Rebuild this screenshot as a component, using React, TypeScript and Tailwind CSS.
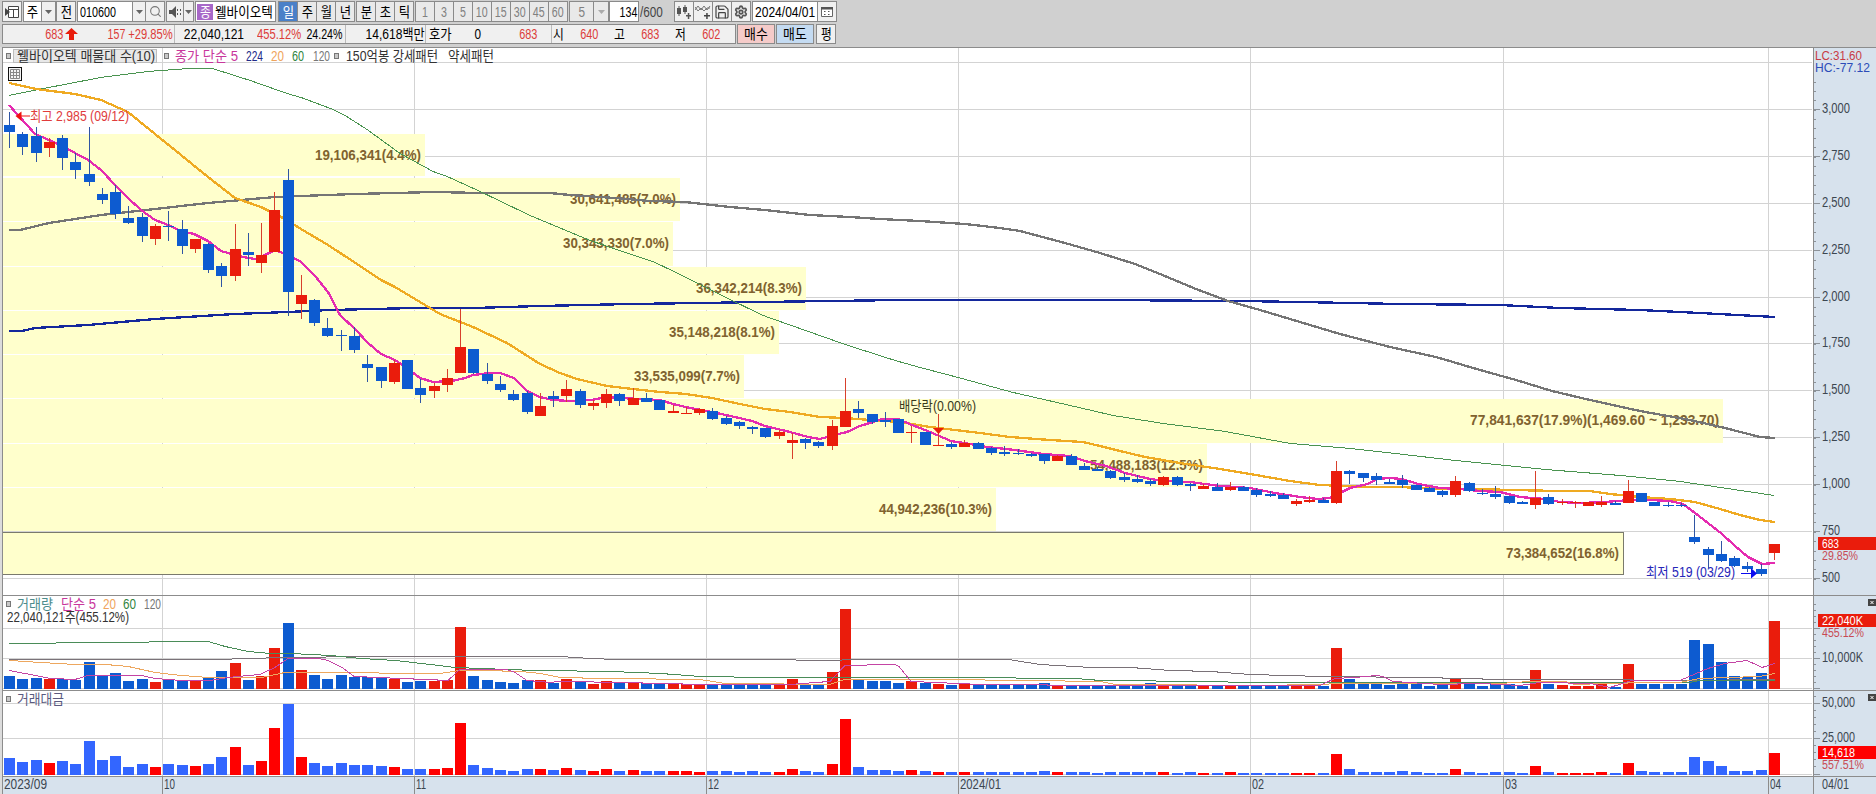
import type { ReactNode } from "react";
import { Search, Settings, Save } from "lucide-react";
import clsx from "clsx";

// [up, high, top, bottom, low, volume, amount]
type Candle = [number, number, number, number, number, number, number];

const candles: Candle[] = [
  [0, 112, 125, 132, 148, 13, 17], [0, 132, 134, 147, 155, 10, 13], [0, 127, 136, 153, 162, 11, 15], [1, 138, 142, 148, 157, 10, 12],
  [0, 135, 138, 158, 170, 10, 14], [0, 153, 162, 170, 179, 9, 11], [0, 127, 174, 182, 186, 27, 34], [0, 188, 194, 200, 204, 13, 15],
  [0, 185, 192, 214, 219, 16, 19], [0, 206, 218, 223, 224, 8, 8], [0, 213, 217, 236, 242, 10, 11], [1, 224, 226, 239, 245, 7, 8],
  [0, 211, 226, 227, 241, 9, 11], [0, 220, 229, 246, 254, 8, 10], [1, 239, 239, 249, 253, 8, 9], [0, 243, 244, 270, 273, 11, 11],
  [0, 263, 266, 276, 287, 18, 18], [1, 224, 249, 276, 281, 26, 28], [0, 233, 252, 255, 266, 9, 10], [1, 223, 255, 263, 273, 13, 14],
  [1, 192, 210, 252, 252, 41, 47], [0, 169, 180, 292, 316, 66, 71], [1, 275, 295, 304, 319, 19, 18], [0, 299, 300, 323, 326, 14, 12],
  [0, 318, 328, 336, 337, 10, 9], [0, 330, 335, 336, 351, 14, 12], [0, 327, 336, 350, 353, 12, 10], [0, 355, 364, 368, 382, 12, 10],
  [0, 367, 367, 381, 388, 11, 9], [1, 360, 363, 382, 384, 10, 8], [0, 360, 360, 389, 389, 7, 6], [0, 379, 388, 395, 403, 8, 6],
  [1, 383, 386, 391, 398, 8, 6], [1, 369, 378, 385, 392, 9, 7], [1, 309, 347, 373, 373, 62, 52], [0, 349, 349, 373, 374, 13, 10],
  [0, 363, 374, 381, 384, 9, 7], [0, 376, 384, 390, 392, 7, 5], [0, 390, 394, 400, 401, 6, 4], [0, 391, 393, 412, 414, 9, 6],
  [1, 393, 406, 416, 416, 9, 6], [0, 391, 396, 399, 407, 6, 5], [1, 380, 389, 396, 402, 10, 7], [0, 389, 391, 405, 408, 7, 5],
  [1, 400, 403, 406, 410, 5, 4], [1, 389, 394, 403, 408, 8, 6], [0, 393, 394, 401, 406, 6, 4], [1, 388, 398, 405, 405, 6, 5],
  [0, 393, 398, 402, 402, 6, 4], [0, 400, 400, 410, 410, 6, 4], [1, 405, 411, 413, 413, 5, 4], [1, 407, 413, 414, 414, 5, 4],
  [1, 408, 409, 413, 415, 4, 3], [0, 408, 411, 419, 420, 4, 4], [0, 416, 418, 424, 425, 4, 4], [0, 421, 422, 426, 429, 4, 3],
  [0, 426, 427, 429, 434, 4, 4], [0, 428, 428, 437, 438, 4, 3], [1, 430, 432, 436, 439, 4, 3], [1, 433, 440, 443, 459, 10, 6],
  [0, 438, 439, 443, 449, 5, 4], [0, 441, 442, 446, 448, 5, 3], [1, 420, 426, 446, 450, 17, 11], [1, 378, 411, 427, 427, 80, 56],
  [0, 401, 409, 413, 418, 9, 8], [0, 414, 414, 422, 424, 8, 5], [0, 412, 420, 422, 427, 8, 5], [0, 419, 419, 433, 433, 6, 4],
  [1, 426, 432, 433, 443, 8, 5], [0, 432, 432, 445, 445, 6, 4], [1, 414, 445, 446, 446, 5, 3], [0, 442, 444, 447, 449, 4, 3],
  [1, 440, 443, 447, 447, 5, 3], [0, 442, 443, 449, 449, 4, 3], [0, 447, 448, 453, 455, 4, 3], [0, 446, 452, 454, 456, 4, 3],
  [0, 449, 453, 454, 455, 4, 3], [0, 453, 454, 456, 457, 4, 3], [0, 454, 454, 461, 464, 6, 4], [1, 455, 456, 461, 461, 4, 3],
  [0, 454, 456, 465, 465, 4, 3], [0, 463, 466, 470, 470, 4, 3], [0, 467, 469, 471, 471, 4, 2], [0, 470, 471, 478, 479, 4, 3],
  [0, 473, 477, 480, 482, 4, 3], [0, 475, 479, 482, 483, 4, 3], [0, 479, 481, 484, 486, 6, 3], [1, 476, 477, 485, 486, 4, 3],
  [0, 476, 477, 485, 486, 4, 2], [0, 483, 484, 486, 491, 4, 3], [1, 484, 486, 489, 489, 3, 2], [0, 483, 487, 491, 491, 3, 2],
  [1, 482, 487, 490, 491, 3, 3], [0, 486, 487, 491, 491, 3, 2], [0, 488, 490, 495, 497, 3, 2], [0, 491, 494, 496, 497, 3, 2],
  [0, 493, 495, 499, 499, 3, 2], [1, 499, 501, 504, 506, 3, 2], [1, 496, 500, 502, 503, 3, 2], [0, 498, 500, 503, 503, 3, 2],
  [1, 461, 471, 503, 504, 41, 21], [0, 470, 471, 474, 484, 10, 6], [0, 473, 473, 478, 482, 5, 3], [0, 473, 476, 480, 485, 6, 3],
  [0, 479, 482, 484, 484, 4, 3], [0, 475, 480, 485, 488, 6, 4], [0, 485, 485, 490, 490, 5, 3], [0, 487, 488, 492, 492, 3, 2],
  [0, 490, 491, 495, 497, 4, 2], [1, 476, 481, 495, 497, 11, 6], [0, 482, 483, 491, 492, 5, 3], [0, 489, 493, 494, 495, 3, 2],
  [0, 486, 494, 497, 499, 5, 3], [0, 496, 496, 503, 504, 5, 3], [0, 501, 502, 504, 504, 3, 2], [1, 471, 498, 505, 509, 19, 9],
  [0, 494, 497, 504, 505, 5, 3], [1, 499, 502, 503, 505, 4, 2], [1, 501, 502, 503, 508, 3, 2], [1, 502, 502, 506, 506, 3, 2],
  [1, 496, 502, 505, 507, 5, 3], [0, 501, 503, 505, 505, 2, 2], [1, 480, 491, 503, 503, 25, 12], [0, 493, 493, 502, 502, 5, 4],
  [0, 502, 502, 506, 506, 5, 3], [0, 502, 505, 506, 507, 5, 3], [0, 503, 505, 506, 507, 5, 3], [0, 515, 537, 542, 544, 49, 18],
  [0, 547, 549, 555, 568, 45, 14], [0, 541, 554, 561, 562, 27, 9], [0, 556, 558, 566, 567, 13, 4], [0, 562, 566, 569, 572, 12, 4],
  [0, 564, 569, 574, 576, 16, 5], [1, 544, 544, 553, 560, 68, 22],
];

const barX = (i: number) => Math.round(4 + i * 13.27);

const profile = [
  { y: 134, b: 176, r: 425, text: "19,106,341(4.4%)", w: 106 },
  { y: 178, b: 221, r: 680, text: "30,641,485(7.0%)", w: 106 },
  { y: 222, b: 266, r: 673, text: "30,343,330(7.0%)", w: 106 },
  { y: 267, b: 310, r: 806, text: "36,342,214(8.3%)", w: 106 },
  { y: 311, b: 354, r: 779, text: "35,148,218(8.1%)", w: 106 },
  { y: 355, b: 398, r: 744, text: "33,535,099(7.7%)", w: 106 },
  { y: 399, b: 443, r: 1723, text: "77,841,637(17.9%)(1,469.60 ~ 1,233.70)", w: 249 },
  { y: 444, b: 487, r: 1207, text: "54,488,183(12.5%)", w: 113 },
  { y: 488, b: 531, r: 996, text: "44,942,236(10.3%)", w: 113 },
];

const ma5 = "9,105 35,134 49,140 62,146 75,153 88,160 101,170 116,186 128,198 141,210 155,220 168,225 181,231 194,234 208,241 221,251 235,255 248,258 256,259 267,254 275,250 290,256 301,262 315,276 328,292 340,315 355,329 368,343 381,354 395,360 408,369 420,378 433,382 452,381 465,378 473,375 490,373 500,373 514,378 527,391 540,397 553,400 570,401 592,400 606,397 620,398 640,399 660,400 673,404 690,408 712,412 735,417 752,421 765,426 790,432 808,437 820,439 834,435 847,432 860,426 873,422 882,419 898,419 912,425 925,430 937,435 951,441 964,443 987,447 1015,450 1043,454 1070,456 1085,461 1106,466 1125,473 1150,479 1165,481 1190,482 1220,486 1250,488 1275,493 1300,497 1318,499 1330,498 1340,493 1350,488 1368,484 1377,479 1390,478 1402,479 1418,484 1440,488 1460,489 1480,491 1500,492 1520,497 1545,499 1560,502 1580,503 1605,502 1630,500 1650,500 1670,501 1683,504 1695,513 1708,523 1722,534 1735,546 1748,557 1762,564 1775,563";
const ma20 = "9,83 36,89 75,94 101,100 128,112 155,134 181,155 208,177 235,198 261,207 285,219 301,229 328,245 354,262 381,280 395,287 420,302 440,314 473,327 507,343 540,364 560,373 577,379 607,386 633,389 660,392 686,394 712,398 740,404 765,409 790,412 820,417 845,418 870,420 900,422 930,427 955,430 980,433 1010,437 1050,440 1083,442 1100,446 1120,451 1145,457 1180,463 1220,469 1250,474 1290,481 1320,485 1345,486 1370,487 1400,487 1440,489 1480,489 1510,490 1560,491 1590,491 1610,494 1640,497 1670,499 1695,502 1720,509 1740,515 1760,520 1775,522";
const ma60 = "9,95 49,87 101,77 148,71 190,68 212,68 225,72 250,80 287,93 301,97 333,109 345,115 367,129 400,153 433,171 447,176 480,191 530,215 590,240 655,262 680,274 732,300 763,315 845,344 895,360 920,367 958,377 1013,392 1070,405 1113,415 1163,423 1225,431 1290,443 1350,448 1395,453 1455,460 1545,469 1620,475 1680,481 1774,495";
const ma120 = "9,230 20,230 49,223 101,215 155,209 208,203 275,197 301,196 354,194 435,192 480,193 550,193 570,195 615,198 650,201 685,202 730,207 765,210 810,215 850,217 880,219 920,221 965,224 1000,228 1020,231 1065,243 1100,253 1135,264 1160,274 1196,289 1228,301 1260,310 1300,322 1340,334 1390,347 1436,357 1480,370 1516,380 1552,391 1590,400 1640,411 1690,420 1725,428 1760,437 1775,438";
const ma224 = "9,331 22,331 35,328 88,325 155,319 235,314 288,312 330,310 415,308 474,308 540,306 630,304 700,303 760,302 830,301 900,300 1100,300 1240,301 1300,302 1400,304 1500,305 1560,308 1640,310 1700,313 1775,317";

const vol60 = "9,643 55,643 58,642 148,642 150,641 208,641 225,646 248,651 270,653 290,653 330,655 360,658 395,660 430,664 455,667 480,668 534,670 610,671 660,673 700,676 760,677 940,677 1075,678 1100,680 1200,681 1250,682 1500,682 1560,682 1690,682 1700,680 1775,680";
const vol120 = "9,659 225,659 240,658 360,656 560,656 590,658 615,659 790,659 800,660 840,660 845,659 1008,659 1040,664 1090,667 1130,667 1170,670 1210,671 1250,674 1320,676 1420,677 1500,679 1560,679 1690,680 1775,679";
const vol20 = "9,660 40,662 75,664 105,664 128,666 155,672 181,675 208,677 262,677 285,672 300,672 440,673 460,670 480,670 520,671 540,673 560,677 600,678 700,679 725,683 830,684 845,679 940,679 1100,681 1115,684 1260,685 1320,684 1340,683 1500,683 1530,681 1565,681 1575,684 1610,683 1650,682 1680,682 1700,678 1760,676 1775,673";
const vol5 = "9,670 30,674 50,678 75,679 88,675 141,675 155,678 181,680 210,680 228,677 260,674 275,667 288,658 318,658 328,660 342,667 354,676 400,678 448,680 460,669 506,669 515,672 527,680 550,682 560,681 620,682 700,684 790,684 830,681 845,665 895,664 899,666 911,681 980,684 1100,685 1320,685 1335,678 1355,677 1377,675 1383,676 1393,681 1440,684 1480,683 1520,685 1540,682 1590,683 1610,687 1632,680 1680,680 1708,668 1725,663 1747,660 1762,667 1775,663";

const months = [
  { x: 162, label: "10", w: 11 },
  { x: 414, label: "11", w: 10 },
  { x: 706, label: "12", w: 11 },
  { x: 958, label: "2024/01", w: 41 },
  { x: 1250, label: "02", w: 12 },
  { x: 1503, label: "03", w: 12 },
  { x: 1768, label: "04", w: 11 },
];

const UP = "#ea1c0c";
const DOWN = "#0d5bd0";

// chart text squeezed to the width of the terminal's bitmap font
function Label({ x, y, w, fill = "#333", size = 14, bold, children }: { x: number; y: number; w: number; fill?: string; size?: number; bold?: boolean; children: string }) {
  return (
    <text x={x} y={y} textLength={w} lengthAdjust="spacingAndGlyphs" fill={fill} fontSize={size} fontWeight={bold ? 700 : 400} xmlSpace="preserve">
      {children}
    </text>
  );
}

function Grid({ top, height, ys }: { top: number; height: number; ys: number[] }) {
  return (
    <g fill="#d3d3d3">
      {ys.map((y) => <rect key={y} x={3} y={y} width={1809} height={1} />)}
      {months.map((m) => <rect key={m.x} x={m.x} y={top} width={1} height={height} />)}
    </g>
  );
}

function Line({ points, color, width = 1 }: { points: string; color: string; width?: number }) {
  return (
    <polyline
      points={points}
      transform={width === 1 ? "translate(0 .45)" : undefined}
      fill="none"
      stroke={color}
      strokeWidth={width}
      strokeLinejoin="round"
      shapeRendering="crispEdges"
    />
  );
}

function Bullet({ x, y }: { x: number; y: number }) {
  return <rect x={x + 0.5} y={y + 0.5} width={4} height={5} fill="#c8c8c8" stroke="#777" />;
}

function Panel({ top, height, children, axis }: { top: number; height: number; children: ReactNode; axis: ReactNode }) {
  return (
    <div className="flex">
      <svg className="block shrink-0 bg-white" width={1813} height={height} viewBox={`0 ${top} 1813 ${height}`}>
        {children}
        <rect x={0} y={top} width={2} height={height} fill="#dcdcdc" />
        <rect x={2} y={top} width={1} height={height} fill="#8c8c8c" />
        <rect x={2} y={top} width={1811} height={1} fill="#8c8c8c" />
      </svg>
      <svg className="block shrink-0 bg-[#d7e2ed]" width={63} height={height} viewBox={`1813 ${top} 63 ${height}`}>
        <rect x={1813} y={top} width={1} height={height} fill="#8c8c8c" />
        <rect x={1813} y={top} width={63} height={1} fill="#8c8c8c" />
        {axis}
      </svg>
    </div>
  );
}

function Ticks({ ys, w }: { ys: number[]; w: number }) {
  return <g fill="#8c9299">{ys.map((y) => <rect key={y} x={1814} y={y} width={w} height={1} />)}</g>;
}

function CloseMark({ y }: { y: number }) {
  return (
    <g>
      <rect x={1868} y={y} width={8} height={7} fill="#444" />
      <path d={`M1870.5 ${y + 2}l3 3m0-3l-3 3`} stroke="#fff" strokeWidth={1} />
    </g>
  );
}

const priceYs = Array.from({ length: 12 }, (_, k) => Math.round(62 + k * 46.9));
const priceMinor = Array.from({ length: 54 }, (_, k) => Math.round(81.5 + k * 9.38)).filter((y) => y < 594);

function PricePanel() {
  return (
    <Panel
      top={47}
      height={548}
      axis={
        <>
          <Ticks ys={priceMinor} w={2} />
          <Ticks ys={priceYs.slice(1)} w={6} />
          <Label x={1815} y={60} w={47} size={12} fill="#c83a44">LC:31.60</Label>
          <Label x={1815} y={72} w={55} size={12} fill="#2b4cb8">HC:-77.12</Label>
          {priceYs.slice(1).map((y, k) => {
            const v = 3000 - k * 250;
            return <Label key={y} x={1822} y={y + 4} w={v >= 1000 ? 28 : 18} fill="#3c4650">{v.toLocaleString("en-US")}</Label>;
          })}
          <rect x={1818} y={537} width={58} height={13} fill={UP} />
          <Label x={1822} y={548} w={17} size={13} fill="#fff">683</Label>
          <Label x={1822} y={560} w={36} size={12} fill="#c84a54">29.85%</Label>
        </>
      }
    >
      <Grid top={47} height={548} ys={priceYs} />
      {profile.map((p) => <rect key={p.y} x={3} y={p.y} width={p.r - 3} height={p.b - p.y} fill="#ffffcc" />)}
      <rect x={2.5} y={532.5} width={1621} height={42} fill="#ffffcc" stroke="#7a7a6c" />
      {profile.map((p) => <Label key={p.y} x={p.r - 4 - p.w} y={p.y + 26} w={p.w} fill="#80622f" size={14} bold>{p.text}</Label>)}
      <Label x={1506} y={558} w={113} fill="#80622f" size={14} bold>73,384,652(16.8%)</Label>
      <Line points={ma224} color="#14289c" width={2.3} />
      <Line points={ma120} color="#757575" width={2.3} />
      <Line points={ma60} color="#4a9450" />
      <Line points={ma20} color="#efaa22" width={2.3} />
      <Line points={ma5} color="#e42bb0" width={2.3} />
      {candles.map(([up, h, t, b, l], i) => (
        <g key={i}>
          <rect x={barX(i) + 5} y={h} width={1} height={l - h} fill={up ? "#d8402c" : "#2f55a4"} />
          <rect x={barX(i)} y={t} width={11} height={b - t} fill={up ? UP : DOWN} />
        </g>
      ))}
      <path d="M15.500 116l6-4.500v9.500zM21 115.500h9v1h-9z" fill="#f01010" />
      <Label x={30} y={121} w={99} fill="#e03c3c">최고 2,985 (09/12)</Label>
      <path d="M1741 573h10v-5l6 5.500l-6 5v-4.500h-10z" fill="#0a0af0" />
      <Label x={1646} y={577} w={89} fill="#2626b8">최저 519 (03/29)</Label>
      <path d="M933 428h11l-5.500 6z" fill={UP} />
      <Label x={899} y={411} w={77} fill="#3a3a1c">배당락(0.00%)</Label>

      <Bullet x={6} y={53} />
      <rect x={13.500} y={49.500} width={143} height={13} fill="#e8e8e8" stroke="#bdbdbd" />
      <Label x={17} y={61} w={138}>웰바이오텍 매물대 수(10)</Label>
      <Bullet x={164} y={53} />
      <Label x={175} y={61} w={63} fill="#c8369c">종가 단순 5</Label>
      <Label x={246} y={61} w={17} fill="#202a88">224</Label>
      <Label x={271} y={61} w={13} fill="#efa45c">20</Label>
      <Label x={292} y={61} w={12} fill="#2f8440">60</Label>
      <Label x={313} y={61} w={17} fill="#777">120</Label>
      <Bullet x={334} y={53} />
      <Label x={346} y={61} w={92}>150억봉 강세패턴</Label>
      <Label x={448} y={61} w={46}>약세패턴</Label>
      <rect x={8.500} y={67.500} width={13} height={13} fill="#f4f4f4" stroke="#111" />
      <path d="M10.500 69.500h9v9h-9zM10.500 72.500h9M10.500 75.500h9M13.500 69.500v9M16.500 69.500v9" fill="none" stroke="#888" />
    </Panel>
  );
}

function VolumePanel() {
  return (
    <Panel
      top={595}
      height={95}
      axis={
        <>
          <Ticks ys={[604, 610, 616, 622, 634, 640, 646, 652, 664, 670, 676, 682]} w={2} />
          <Ticks ys={[628, 658, 688]} w={6} />
          <CloseMark y={599} />
          <rect x={1818} y={614} width={58} height={13} fill={UP} />
          <Label x={1822} y={625} w={41} size={13} fill="#fff">22,040K</Label>
          <Label x={1822} y={637} w={42} size={12} fill="#c84a54">455.12%</Label>
          <Label x={1822} y={662} w={41} fill="#3c4650">10,000K</Label>
        </>
      }
    >
      <Grid top={595} height={95} ys={[628, 658, 688]} />
      {candles.map((c, i) => <rect key={i} x={barX(i)} y={689 - c[5]} width={11} height={c[5]} fill={c[0] ? UP : DOWN} />)}
      <Line points={vol120} color="#7a7278" />
      <Line points={vol60} color="#4a8c58" />
      <Line points={vol20} color="#eda75e" />
      <Line points={vol5} color="#c444a4" />
      <Bullet x={6} y={601} />
      <Label x={17} y={609} w={36} fill="#4c8c8c">거래량</Label>
      <Label x={61} y={609} w={35} fill="#c8369c">단순 5</Label>
      <Label x={103} y={609} w={13} fill="#efa45c">20</Label>
      <Label x={123} y={609} w={13} fill="#2f8440">60</Label>
      <Label x={144} y={609} w={17} fill="#777">120</Label>
      <Label x={7} y={622} w={122}>22,040,121주(455.12%)</Label>
    </Panel>
  );
}

function AmountPanel() {
  return (
    <Panel
      top={690}
      height={86}
      axis={
        <>
          <Ticks ys={[696, 710, 717, 724, 731, 745, 752, 759, 766]} w={2} />
          <Ticks ys={[703, 738, 774]} w={6} />
          <CloseMark y={694} />
          <Label x={1822} y={707} w={33} fill="#3c4650">50,000</Label>
          <Label x={1822} y={742} w={33} fill="#3c4650">25,000</Label>
          <rect x={1818} y={746} width={58} height={13} fill="#f00" />
          <Label x={1822} y={757} w={33} size={13} fill="#fff">14,618</Label>
          <Label x={1822} y={769} w={42} size={12} fill="#c84a54">557.51%</Label>
        </>
      }
    >
      <Grid top={690} height={86} ys={[703, 738, 774]} />
      {candles.map((c, i) => <rect key={i} x={barX(i)} y={775 - c[6]} width={11} height={c[6]} fill={c[0] ? "#ff0000" : "#3366ff"} />)}
      <Bullet x={6} y={696} />
      <Label x={17} y={704} w={47} fill="#5a5a80">거래대금</Label>
    </Panel>
  );
}

function DateAxis() {
  return (
    <svg className="block bg-[#d7e2ed]" width={1876} height={18} viewBox="0 776 1876 18">
      <rect x={0} y={776} width={2} height={18} fill="#dcdcdc" />
      <rect x={2} y={776} width={1} height={18} fill="#8c8c8c" />
      <rect x={2} y={776} width={1874} height={1} fill="#8c8c8c" />
      <Label x={4} y={789} w={43} fill="#3c4650">2023/09</Label>
      {months.map((m) => (
        <g key={m.x}>
          <rect x={m.x} y={776} width={1} height={18} fill="#8c8c8c" />
          <Label x={m.x + 2} y={789} w={m.w} fill="#3c4650">{m.label}</Label>
        </g>
      ))}
      <rect x={1813} y={776} width={1} height={18} fill="#8c8c8c" />
      <Label x={1822} y={789} w={27} fill="#3c4650">04/01</Label>
    </svg>
  );
}

function Cell({ className, children }: { className?: string; children?: ReactNode }) {
  return (
    <div className={clsx("flex h-full shrink-0 items-center justify-center border border-[#8a8a8a] whitespace-nowrap", className)}>
      {children}
    </div>
  );
}

function Txt({ className, children }: { className?: string; children: ReactNode }) {
  return <span className={clsx("inline-block shrink-0", className ?? "scale-x-[.84]")}>{children}</span>;
}

function Caret({ className = "text-[#666]" }: { className?: string }) {
  return (
    <svg className={clsx("shrink-0", className)} width="7" height="4" viewBox="0 0 7 4"><path d="M0 0h7L3.500 4z" fill="currentColor" /></svg>
  );
}

function Toolbar() {
  return (
    <div className="flex h-[22px] pt-px pl-[2px]">
      <Cell className="w-5 bg-[#f0f0f0]">
        <svg width="14" height="14" viewBox="0 0 14 14">
          <path d="M3.500 1.500h10v11h-10zM3.500 4.500h10M8.500 4.500v8" fill="#fff" stroke="#444" />
          <path d="M0 3v8l5-4z" fill="#444" />
        </svg>
      </Cell>
      <Cell className="ml-px w-[19px] bg-white"><Txt className="scale-x-[.88]">주</Txt></Cell>
      <Cell className="-ml-px w-[15px] bg-[#f0f0f0]"><Caret /></Cell>
      <Cell className="w-5 bg-[#f0f0f0]"><Txt className="scale-x-[.88]">전</Txt></Cell>
      <Cell className="ml-px w-14 justify-start bg-white pl-[2px]"><Txt className="origin-left scale-x-[.77]">010600</Txt></Cell>
      <Cell className="-ml-px w-3.5 bg-[#f0f0f0]"><Caret /></Cell>
      <Cell className="-ml-px w-5 bg-[#f0f0f0]"><Search size={13} color="#777" /></Cell>
      <Cell className="ml-px w-[18px] bg-[#f0f0f0]">
        <svg width="13" height="12" viewBox="0 0 13 12">
          <path d="M0 4h3l4-4v12l-4-4h-3z" fill="#555" />
          <path d="M8 3h1v2h-1zM8 7h1v2h-1zM11 3h1v2h-1zM11 7h1v2h-1z" fill="#555" />
        </svg>
      </Cell>
      <Cell className="-ml-px w-[11px] bg-[#f0f0f0]"><Caret /></Cell>
      <Cell className="ml-px w-[81px] justify-start bg-white pl-px">
        <span className="flex h-4 w-4 shrink-0 items-center justify-center bg-[#a868c8] text-white"><Txt>종</Txt></span>
        <Txt className="ml-[2px] origin-left scale-x-[.9]">웰바이오텍</Txt>
      </Cell>
      <Cell className="ml-[2px] w-5 bg-[#4a80c8] text-white"><Txt className="scale-x-[.88]">일</Txt></Cell>
      {["주", "월", "년"].map((t) => <Cell key={t} className="-ml-px w-5 bg-[#e9e9e9]"><Txt className="scale-x-[.88]">{t}</Txt></Cell>)}
      <Cell className="ml-px w-5 bg-[#e9e9e9]"><Txt className="scale-x-[.88]">분</Txt></Cell>
      {["초", "틱"].map((t) => <Cell key={t} className="-ml-px w-5 bg-[#e9e9e9]"><Txt className="scale-x-[.88]">{t}</Txt></Cell>)}
      <div className="ml-px flex text-[#808080]">
        {["1", "3", "5", "10", "15", "30", "45", "60"].map((t, i) => (
          <Cell key={t} className={clsx("w-5 bg-[#e9e9e9]", i > 0 && "-ml-px")}><Txt className="scale-x-[.76]">{t}</Txt></Cell>
        ))}
      </div>
      <Cell className="ml-px w-[25px] bg-[#e9e9e9] text-[#808080]"><Txt>5</Txt></Cell>
      <Cell className="-ml-px w-4 bg-[#e9e9e9]"><Caret className="text-[#aaa]" /></Cell>
      <Cell className="w-[30px] justify-end bg-white pr-px"><Txt className="origin-right scale-x-[.76]">134</Txt></Cell>
      <div className="flex w-[35px] items-center pl-px text-[#444]"><Txt className="origin-left scale-x-[.84]">/600</Txt></div>
      <Cell className="w-5 bg-[#f0f0f0]">
        <svg width="15" height="14" viewBox="0 0 15 14"><path d="M0 3h4v6h-4zM1.500 1h1v10h-1zM6 2h4v5h-4zM7.500 0h1v9h-1zM9 10h5v1.500h-5zM10.800 8h1.500v6h-1.500z" fill="#555" /></svg>
      </Cell>
      <Cell className="-ml-px w-5 bg-[#f0f0f0]">
        <svg width="16" height="14" viewBox="0 0 16 14">
          <path d="M0 5l3-4 3 4 3-4 3 4 3-4M0 2l3 4 3-3 3 3 3-3 3 0" fill="none" stroke="#777" />
          <path d="M9 10h6v1.500h-6zM11.200 8h1.500v6h-1.500z" fill="#444" />
        </svg>
      </Cell>
      <Cell className="-ml-px w-5 bg-[#f0f0f0]"><Save size={16} color="#444" strokeWidth={1.8} /></Cell>
      <Cell className="-ml-px w-5 bg-[#f0f0f0]"><Settings size={14} color="#555" strokeWidth={3} /></Cell>
      <Cell className="ml-px w-[66px] justify-start bg-white pl-[2px]"><Txt className="origin-left scale-x-[.86]">2024/04/01</Txt></Cell>
      <Cell className="-ml-px w-5 bg-[#f0f0f0]">
        <svg width="12" height="11" viewBox="0 0 12 11">
          <path d="M.5 1.500h11v9h-11z" fill="#fff" stroke="#666" />
          <path d="M0 1h12v2.500h-12zM3 5h1.500v1h-1.500zM7 5h1.500v1h-1.500zM3 8h1.500v1h-1.500zM7 8h1.500v1h-1.500z" fill="#555" />
        </svg>
      </Cell>
    </div>
  );
}

function QuoteBar() {
  return (
    <div className="mt-[2px] flex h-5 pl-[2px]">
      <div className="flex h-full w-[734px] items-center border border-[#8a8a8a] bg-[#f0f0f0] text-[#dc3c38]">
        <div className="flex h-full w-[172px] items-center border-r border-[#bbb]">
          <span className="flex w-[60px] justify-end"><Txt className="origin-right scale-x-[.78]">683</Txt></span>
          <svg className="ml-[2px]" width="13" height="12" viewBox="0 0 13 12"><path d="M6.500 0l6.500 6h-4v6h-5v-6h-4z" fill="#e81c0c" /></svg>
          <span className="flex w-[47px] justify-end"><Txt className="origin-right scale-x-[.76]">157</Txt></span>
          <span className="flex w-12 justify-end"><Txt className="origin-right scale-x-[.8]">+29.85%</Txt></span>
        </div>
        <div className="flex h-full w-[171px] items-center border-r border-[#bbb]">
          <span className="flex w-[69px] justify-end text-black"><Txt className="origin-right scale-x-[.86]">22,040,121</Txt></span>
          <span className="flex w-[58px] justify-end"><Txt className="origin-right scale-x-[.8]">455.12%</Txt></span>
          <span className="flex w-[41px] justify-end text-black"><Txt className="origin-right scale-x-[.76]">24.24%</Txt></span>
        </div>
        <div className="flex h-full w-[81px] items-center justify-end border-r border-[#bbb] pr-px text-black"><Txt className="origin-right scale-x-[.86]">14,618백만</Txt></div>
        <div className="flex h-full w-[126px] items-center border-r border-[#bbb]">
          <span className="flex w-[30px] pl-[3px] text-black"><Txt className="origin-left scale-x-[.88]">호가</Txt></span>
          <span className="flex w-[25px] justify-end text-black"><Txt>0</Txt></span>
          <span className="flex w-14 justify-end"><Txt className="origin-right scale-x-[.78]">683</Txt></span>
        </div>
        {[["시", "640"], ["고", "683"], ["저", "602"]].map(([k, v]) => (
          <div key={k} className="flex w-[61px] items-center">
            <span className="flex w-4 pl-px text-black"><Txt className="origin-left scale-x-[.84]">{k}</Txt></span>
            <span className="flex w-[30px] justify-end"><Txt className="origin-right scale-x-[.78]">{v}</Txt></span>
          </div>
        ))}
      </div>
      <Cell className="ml-px w-[38px] bg-[#f5cbc9]"><Txt className="scale-x-[.92]">매수</Txt></Cell>
      <Cell className="ml-px w-[38px] bg-[#c4dbf2]"><Txt className="scale-x-[.92]">매도</Txt></Cell>
      <Cell className="ml-[2px] w-5 bg-[#f0f0f0]"><Txt>평</Txt></Cell>
    </div>
  );
}

export default function App() {
  return (
    <div className="flex h-[794px] w-[1876px] flex-col overflow-hidden bg-[#d0d0d0] font-['Liberation_Sans','Noto_Sans_CJK_KR',sans-serif] text-[14px] leading-none text-black">
      <div className="h-[47px] shrink-0">
        <Toolbar />
        <QuoteBar />
      </div>
      <PricePanel />
      <VolumePanel />
      <AmountPanel />
      <DateAxis />
    </div>
  );
}
